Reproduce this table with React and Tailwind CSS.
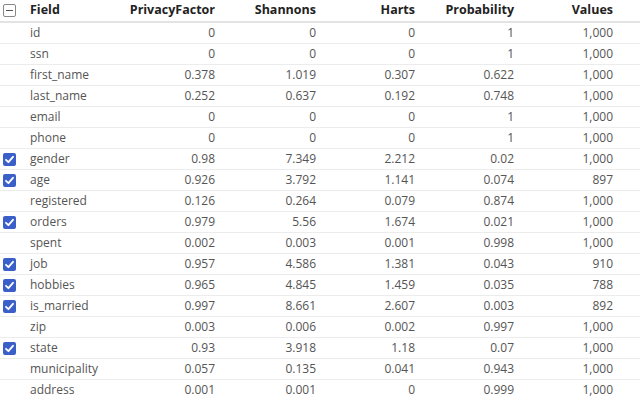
import React from "react";

const rows = [
  ["id", false, "0", "0", "0", "1", "1,000"],
  ["ssn", false, "0", "0", "0", "1", "1,000"],
  ["first_name", false, "0.378", "1.019", "0.307", "0.622", "1,000"],
  ["last_name", false, "0.252", "0.637", "0.192", "0.748", "1,000"],
  ["email", false, "0", "0", "0", "1", "1,000"],
  ["phone", false, "0", "0", "0", "1", "1,000"],
  ["gender", true, "0.98", "7.349", "2.212", "0.02", "1,000"],
  ["age", true, "0.926", "3.792", "1.141", "0.074", "897"],
  ["registered", false, "0.126", "0.264", "0.079", "0.874", "1,000"],
  ["orders", true, "0.979", "5.56", "1.674", "0.021", "1,000"],
  ["spent", false, "0.002", "0.003", "0.001", "0.998", "1,000"],
  ["job", true, "0.957", "4.586", "1.381", "0.043", "910"],
  ["hobbies", true, "0.965", "4.845", "1.459", "0.035", "788"],
  ["is_married", true, "0.997", "8.661", "2.607", "0.003", "892"],
  ["zip", false, "0.003", "0.006", "0.002", "0.997", "1,000"],
  ["state", true, "0.93", "3.918", "1.18", "0.07", "1,000"],
  ["municipality", false, "0.057", "0.135", "0.041", "0.943", "1,000"],
  ["address", false, "0.001", "0.001", "0", "0.999", "1,000"],
];

const grid = "grid grid-cols-[26px_99px_95px_101px_99px_99px_99px_1fr] items-center";

function Check() {
  return (
    <div className="w-[13px] h-[13px] rounded-[2px] bg-[#3b5fc8] flex items-center justify-center ml-[3px]">
      <svg width="11" height="11" viewBox="0 0 11 11">
        <path d="M2 5.8 L4.4 8.2 L9 2.8" fill="none" stroke="white" strokeWidth="1.8" strokeLinecap="round" strokeLinejoin="round" />
      </svg>
    </div>
  );
}

export default function App() {
  return (
    <div className="w-[640px] h-[400px] overflow-hidden bg-white text-[12px]" style={{ fontFamily: '"Open Sans", "Noto Sans", sans-serif' }}>
      <div className={`${grid} h-[23px] border-b-2 border-[#e3e3e3] font-bold text-[#222] text-[12.5px]`}>
        <div className="pl-[3px]">
          <div className="w-[13px] h-[13px] border border-[#888] rounded-[2px] flex items-center justify-center">
            <div className="w-[7px] h-[1.5px] bg-[#555]" />
          </div>
        </div>
        <div className="pl-[4px]">Field</div>
        <div className="text-right pr-[5px]">PrivacyFactor</div>
        <div className="text-right pr-[5px]">Shannons</div>
        <div className="text-right pr-[5px]">Harts</div>
        <div className="text-right pr-[5px]">Probability</div>
        <div className="text-right pr-[5px]">Values</div>
        <div />
      </div>
      {rows.map((r) => (
        <div key={r[0]} className={`${grid} h-[21px] border-b border-[#ececec] text-[#555]`}>
          <div>{r[1] ? <Check /> : null}</div>
          <div className="pl-[4px]">{r[0]}</div>
          <div className="text-right pr-[5px]">{r[2]}</div>
          <div className="text-right pr-[5px]">{r[3]}</div>
          <div className="text-right pr-[5px]">{r[4]}</div>
          <div className="text-right pr-[5px]">{r[5]}</div>
          <div className="text-right pr-[5px]">{r[6]}</div>
          <div />
        </div>
      ))}
    </div>
  );
}
